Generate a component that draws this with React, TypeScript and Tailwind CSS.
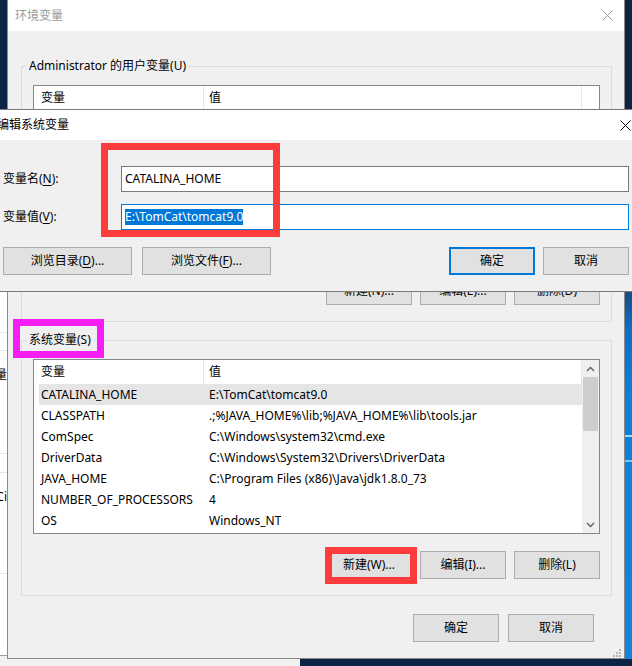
import React from "react";

type Row = [string, string];

const sysRows: Row[] = [
  ["CATALINA_HOME", "E:\\TomCat\\tomcat9.0"],
  ["CLASSPATH", ".;%JAVA_HOME%\\lib;%JAVA_HOME%\\lib\\tools.jar"],
  ["ComSpec", "C:\\Windows\\system32\\cmd.exe"],
  ["DriverData", "C:\\Windows\\System32\\Drivers\\DriverData"],
  ["JAVA_HOME", "C:\\Program Files (x86)\\Java\\jdk1.8.0_73"],
  ["NUMBER_OF_PROCESSORS", "4"],
  ["OS", "Windows_NT"],
];

const userRows: Row[] = [
  ["OneDrive", "C:\\Users\\Administrator\\OneDrive"],
  ["Path", "C:\\Users\\Administrator\\AppData\\Local\\Microsoft\\WindowsApps;"],
  ["TEMP", "%USERPROFILE%\\AppData\\Local\\Temp"],
  ["TMP", "%USERPROFILE%\\AppData\\Local\\Temp"],
];

function CloseX({ color }: { color: string }) {
  return (
    <svg width="11" height="11" viewBox="0 0 11 11" fill="none">
      <path d="M0.5 0.5L10.5 10.5M10.5 0.5L0.5 10.5" stroke={color} strokeWidth="1" />
    </svg>
  );
}

function Chevron({ up }: { up?: boolean }) {
  return (
    <svg width="9" height="6" viewBox="0 0 9 6" fill="none">
      <path d={up ? "M1 5L4.5 1.5L8 5" : "M1 1L4.5 4.5L8 1"} stroke="#606060" strokeWidth="1.4" />
    </svg>
  );
}

function Btn({
  children,
  wide,
  primary,
}: {
  children: React.ReactNode;
  wide?: boolean;
  primary?: boolean;
}) {
  return (
    <div
      className={`${wide ? "w-[129px]" : "w-[86px]"} h-[28px] shrink-0 flex items-center justify-center bg-[#e1e1e1] ${
        primary ? "border-2 border-[#0078d7]" : "border border-[#adadad]"
      } text-[12px] leading-[16px] text-black whitespace-nowrap`}
    >
      {children}
    </div>
  );
}

function U({ children }: { children: React.ReactNode }) {
  return <span className="underline underline-offset-2 decoration-1">{children}</span>;
}

function ListView({ rows, scroll }: { rows: Row[]; scroll?: boolean }) {
  return (
    <div className="h-[175px] border border-[#828790] bg-white flex text-[12px] text-black">
      <div className="flex-1 min-w-0 flex flex-col overflow-hidden">
        <div className="h-[24px] flex shrink-0">
          <div className="w-[170px] h-full pl-[7px] flex items-center border-r border-[#e5e5e5] leading-[16px]">
            变量
          </div>
          <div className="flex-1 h-full pl-[5px] flex items-center border-r border-[#e5e5e5] leading-[16px]">
            值
          </div>
        </div>
        {rows.map(([k, v], i) => (
          <div
            key={k}
            className={`ml-[5px] h-[21px] shrink-0 flex items-center whitespace-nowrap leading-[21px] ${
              i === 0 && scroll ? "bg-[#e5e5e5]" : ""
            }`}
          >
            <div className="w-[164px] pl-[2px] shrink-0 overflow-hidden">{k}</div>
            <div className="pl-[6px] overflow-hidden">{v}</div>
          </div>
        ))}
      </div>
      {scroll ? (
        <div className="w-[17px] shrink-0 bg-[#f0f0f0] flex flex-col">
          <div className="h-[17px] flex items-center justify-center">
            <Chevron up />
          </div>
          <div className="h-[54px] mx-[1px] bg-[#cdcdcd]" />
          <div className="flex-1" />
          <div className="h-[17px] flex items-center justify-center">
            <Chevron />
          </div>
        </div>
      ) : (
        <div className="w-[17px] shrink-0" />
      )}
    </div>
  );
}

function Group({
  label,
  rows,
  scroll,
  buttons,
  className,
}: {
  label: string;
  rows: Row[];
  scroll?: boolean;
  buttons: string[];
  className?: string;
}) {
  return (
    <fieldset className={`border border-[#dcdcdc] px-[11px] pt-[11px] pb-[16px] min-w-0 ${className ?? ""}`}>
      <legend className="ml-[-6px] px-[2px] text-[12px] leading-[16px] text-black">{label}</legend>
      <ListView rows={rows} scroll={scroll} />
      <div className="mt-[17px] flex justify-end gap-[8px]">
        {buttons.map((b) => (
          <Btn key={b}>{b}</Btn>
        ))}
      </div>
    </fieldset>
  );
}

function Grip() {
  return (
    <svg width="8" height="8" viewBox="0 0 8 8">
      <g fill="#b4b4b4">
        <rect x="6" y="0" width="2" height="2" />
        <rect x="3" y="3" width="2" height="2" />
        <rect x="6" y="3" width="2" height="2" />
        <rect x="0" y="6" width="2" height="2" />
        <rect x="3" y="6" width="2" height="2" />
        <rect x="6" y="6" width="2" height="2" />
      </g>
    </svg>
  );
}

export default function App() {
  return (
    <div className="relative w-[632px] h-[666px] overflow-hidden bg-[#0c2545] font-['Noto_Sans','Noto_Sans_CJK_SC',sans-serif] text-[12px]">
      {/* window behind on the left / bottom */}
      <div className="absolute left-0 top-[280px] w-[300px] h-[386px] bg-[#f0f0f0]">
        <div className="w-[7px] h-[376px] bg-white border-b border-[#a0a0a0] flex flex-col overflow-hidden">
          <div className="h-[52px] shrink-0" />
          <div className="h-px shrink-0 bg-[#e5e5e5]" />
          <div className="h-[17px] shrink-0" />
          <div className="h-px shrink-0 bg-[#e5e5e5]" />
          <div className="h-[102px] shrink-0 pt-[16px] flex justify-end whitespace-nowrap leading-[16px] text-black">
            <span className="shrink-0">变量</span>
          </div>
          <div className="h-px shrink-0 bg-[#e5e5e5]" />
          <div className="h-[18px] shrink-0" />
          <div className="h-px shrink-0 bg-[#e5e5e5]" />
          <div className="h-[100px] shrink-0 pt-[16px] flex justify-end whitespace-nowrap leading-[16px] text-black">
            <span className="shrink-0">Ci</span>
          </div>
          <div className="h-px shrink-0 bg-[#e5e5e5]" />
        </div>
      </div>

      {/* desktop strip on the right */}
      <div className="absolute left-[625px] top-[291px] w-[7px] h-[368px] bg-[linear-gradient(180deg,#194a82_0%,#0f6cc4_10%,#0b80dc_28%,#1186df_100%)] flex flex-col">
        <div className="h-[144px] shrink-0" />
        <div className="h-[2px] shrink-0 bg-[#a8d8ff]" />
        <div className="h-[23px] shrink-0" />
        <div className="h-[2px] shrink-0 bg-[#84c6ff]" />
      </div>

      {/* 环境变量 dialog */}
      <div className="absolute left-[7px] top-[-1px] w-[618px] h-[660px] border border-[#8a8a8a] bg-[#f0f0f0] flex flex-col">
        <div className="h-[31px] shrink-0 bg-white flex items-center justify-between">
          <span className="pl-[7px] text-[#999999] leading-[16px]">环境变量</span>
          <div className="pr-[11px] flex items-center">
            <CloseX color="#999999" />
          </div>
        </div>
        <div className="pl-[13px] pr-[12px] pt-[27px] flex flex-col">
          <Group
            label="Administrator 的用户变量(U)"
            rows={userRows}
            buttons={["新建(N)...", "编辑(E)...", "删除(D)"]}
          />
          <Group
            className="mt-[10px]"
            label="系统变量(S)"
            rows={sysRows}
            scroll
            buttons={["新建(W)...", "编辑(I)...", "删除(L)"]}
          />
          <div className="mt-[18px] pr-[18px] flex justify-end gap-[9px]">
            <Btn>确定</Btn>
            <Btn>取消</Btn>
          </div>
        </div>
        <div className="mt-auto flex justify-end pr-[3px] pb-[1px]">
          <Grip />
        </div>
      </div>

      {/* 编辑系统变量 dialog */}
      <div className="absolute left-[-11px] top-[109px] w-[661px] border border-[#7a7a7a] bg-[#f0f0f0] flex flex-col text-black">
        <div className="h-[30px] bg-white flex items-center justify-between">
          <span className="pl-[7px] leading-[16px]">编辑系统变量</span>
          <div className="pr-[18px] flex items-center">
            <CloseX color="#000000" />
          </div>
        </div>
        <div className="pl-[13px] pr-[20px] pt-[26px] pb-[16px] flex flex-col">
          <div className="flex items-center h-[26px]">
            <div className="w-[118px] shrink-0 leading-[16px]">
              变量名(<U>N</U>):
            </div>
            <div className="flex-1 h-full bg-white border border-[#7a7a7a] pl-[3px] flex items-center leading-[16px] whitespace-nowrap">
              CATALINA_HOME
            </div>
          </div>
          <div className="mt-[12px] flex items-center h-[26px]">
            <div className="w-[118px] shrink-0 leading-[16px]">
              变量值(<U>V</U>):
            </div>
            <div className="flex-1 h-full bg-white border border-[#0078d7] pl-[3px] flex items-center leading-[16px] whitespace-nowrap">
              <span className="bg-[#0078d7] text-white">E:\TomCat\tomcat9.0</span>
            </div>
          </div>
          <div className="mt-[17px] flex">
            <div className="flex gap-[10px]">
              <Btn wide>
                浏览目录(<U>D</U>)...
              </Btn>
              <Btn wide>
                浏览文件(<U>F</U>)...
              </Btn>
            </div>
            <div className="ml-auto flex gap-[8px]">
              <Btn primary>确定</Btn>
              <Btn>取消</Btn>
            </div>
          </div>
        </div>
      </div>

      {/* annotations */}
      <div className="absolute left-[101px] top-[143px] w-[179px] h-[94px] border-[7px] border-[#fc3c3c]" />
      <div className="absolute left-[13px] top-[319px] w-[91px] h-[39px] border-[7px] border-[#f81df5]" />
      <div className="absolute left-[325px] top-[547px] w-[92px] h-[37px] border-[7px] border-[#fc3c3c]" />
    </div>
  );
}
